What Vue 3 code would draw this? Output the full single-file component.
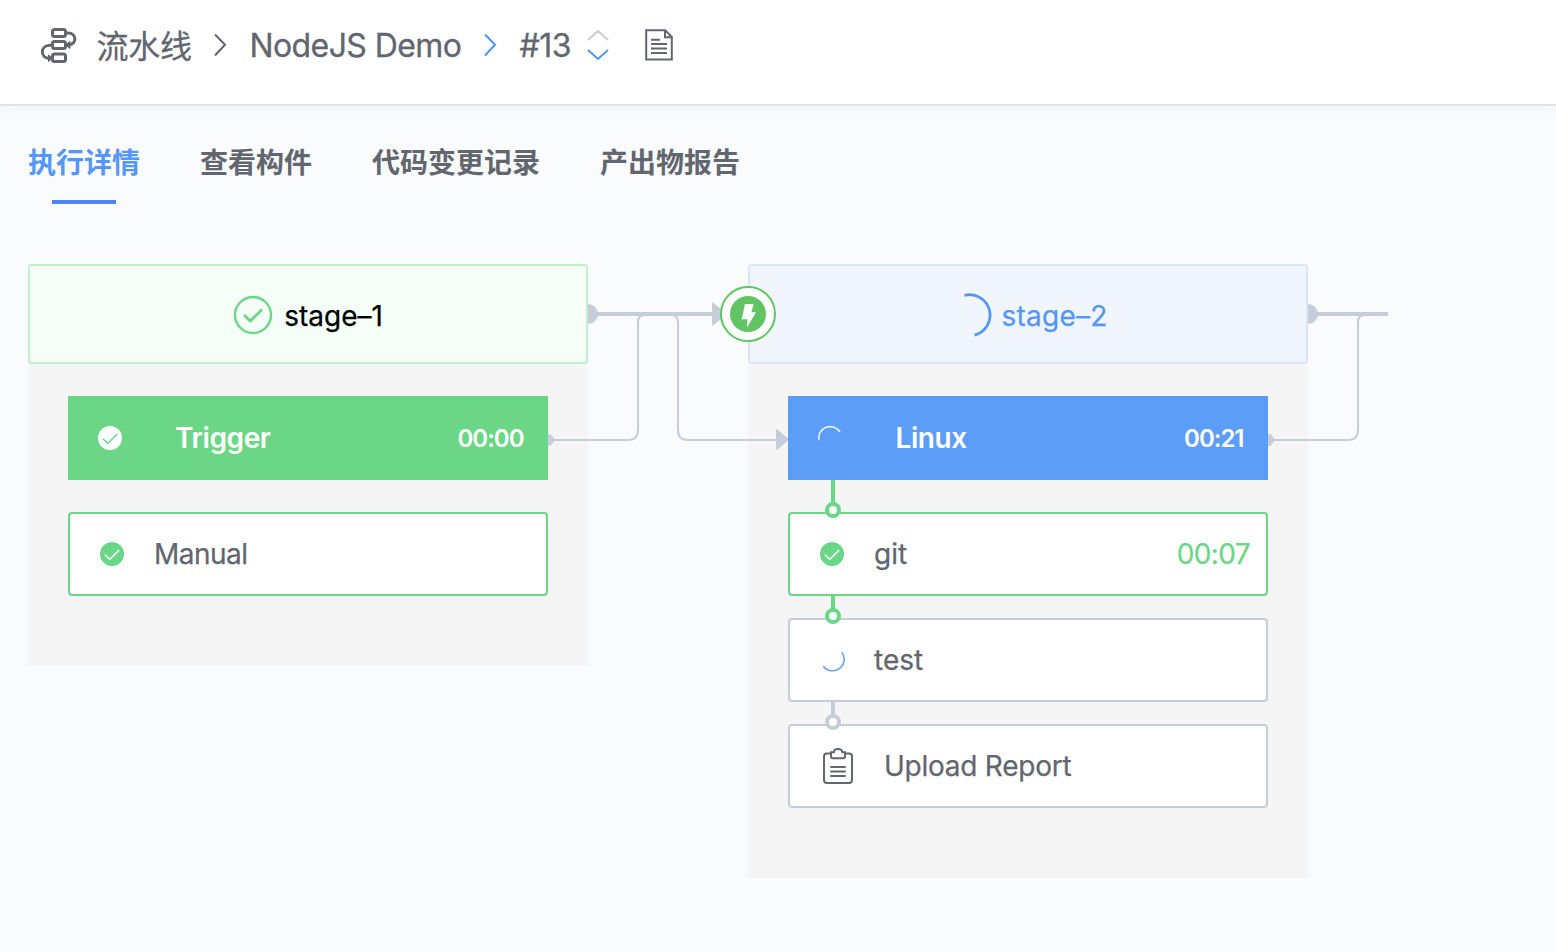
<script setup>
const tabs = [
  { label: '执行详情', active: true },
  { label: '查看构件' },
  { label: '代码变更记录' },
  { label: '产出物报告' },
]

const stages = [
  {
    name: 'stage–1',
    state: 'done',
    job: { name: 'Trigger', time: '00:00' },
    steps: [{ name: 'Manual', state: 'done' }],
  },
  {
    name: 'stage–2',
    state: 'running',
    job: { name: 'Linux', time: '00:21' },
    steps: [
      { name: 'git', state: 'done', time: '00:07', link: 'green' },
      { name: 'test', state: 'running', link: 'green' },
      { name: 'Upload Report', state: 'waiting', link: 'gray' },
    ],
  },
]
</script>

<template>
  <div class="page">
    <header class="header">
      <svg class="logo" width="38" height="38" viewBox="0 0 38 38" fill="none" stroke="#62666f" stroke-width="3">
        <rect x="12.5" y="2.5" width="13" height="7" rx="2" />
        <rect x="12.5" y="14.5" width="13" height="7" rx="2" />
        <rect x="12.5" y="27" width="13" height="7.5" rx="2" />
        <path d="M25.5 6H28C37 6 37 17.5 29 17.8M12.5 18.3H10C0 18.5 0 30.5 9 31.5" />
        <path d="M25.5 18L30 14.5V21.5ZM12.5 31.2L8.5 28V34.5Z" fill="#62666f" stroke-width="1" />
      </svg>
      <span class="crumb crumb-root">流水线</span>
      <svg class="sep sep-a" width="14" height="24" viewBox="0 0 14 24" fill="none" stroke="#62666f" stroke-width="2"><path d="M2 1.5L12 11.8L2 22.5" /></svg>
      <span class="crumb crumb-name">NodeJS Demo</span>
      <svg class="sep sep-b" width="14" height="24" viewBox="0 0 14 24" fill="none" stroke="#4e94fa" stroke-width="2"><path d="M2 1.5L12 11.8L2 22.5" /></svg>
      <span class="crumb crumb-no">#13</span>
      <svg class="updown" width="22" height="32" viewBox="0 0 22 32" fill="none" stroke-width="2">
        <path d="M1 11L11 2L21 11" stroke="#c5ced8" />
        <path d="M1 21L11 30L21 21" stroke="#4e94fa" />
      </svg>
      <svg class="doc" width="28" height="32" viewBox="0 0 28 32" fill="none" stroke="#62666f" stroke-width="2">
        <path d="M1.2 1.2H20.2L26.8 8V30.5H1.2Z" />
        <path d="M20 1.5V8.2H26.5M6 10.8H15M6 15H22M6 19.5H22M6 24H22" />
      </svg>
    </header>

    <nav class="tabs">
      <a v-for="t in tabs" :key="t.label" class="tab" :class="{ active: t.active }">{{ t.label }}</a>
    </nav>

    <main class="board">
      <section v-for="s in stages" :key="s.name" class="stage" :class="s.state">
        <div class="stage-head">
          <svg v-if="s.state === 'done'" class="head-check" width="40" height="40" viewBox="0 0 40 40" fill="none" stroke="#6bd686">
            <circle cx="20" cy="20" r="18" stroke-width="2.4" />
            <path d="M11 20L17.3 26L29 14.5" stroke-width="2.8" />
          </svg>
          <svg v-else class="head-spin" width="46" height="46" viewBox="0 0 46 46" fill="none" stroke="#5597f8">
            <path d="M14.5 3.3A20.5 20.5 0 0 1 24.5 43.2" stroke-width="2.8" />
          </svg>
          <span class="stage-name">{{ s.name }}</span>
        </div>

        <div class="jobs">
          <div class="job">
            <svg v-if="s.state === 'done'" class="job-icon" width="24" height="24" viewBox="0 0 24 24" fill="none">
              <circle cx="12" cy="12" r="12" fill="#fff" />
              <path d="M4.8 12.8L9.8 17.3L19.3 8" stroke="#6bd686" stroke-width="1.5" />
            </svg>
            <svg v-else class="job-icon" width="24" height="24" viewBox="0 0 24 24" fill="none">
              <path d="M1 16.2A11.4 11.4 0 0 1 22 8.2" stroke="#e8f2ff" stroke-width="1.6" />
            </svg>
            <span class="job-name">{{ s.job.name }}</span>
            <span class="job-time">{{ s.job.time }}</span>
          </div>

          <div class="steps">
            <div v-for="st in s.steps" :key="st.name" class="step" :class="st.state">
              <i v-if="st.link" class="link" :class="st.link"></i>
              <svg v-if="st.state === 'done'" class="step-icon" width="24" height="24" viewBox="0 0 24 24" fill="none">
                <circle cx="12" cy="12" r="12" fill="#6bd686" />
                <path d="M4.8 12.8L9.8 17.3L19.3 8" stroke="#fff" stroke-width="1.5" />
              </svg>
              <svg v-else-if="st.state === 'running'" class="step-icon" width="26" height="24" viewBox="0 0 26 24" fill="none">
                <path d="M21.8 4.2A11 11 0 0 1 3.3 18.2" stroke="#65a4fa" stroke-width="1.6" />
              </svg>
              <svg v-else class="clip" width="32" height="38" viewBox="0 0 32 38" fill="none" stroke="#62666f" stroke-width="2">
                <path d="M9 6.5H5Q2 6.5 2 9.5V33Q2 36 5 36H27Q30 36 30 33V9.5Q30 6.5 27 6.5H23" />
                <path d="M9 5.2H11.8Q12 2 16 2T20.3 5.2H23V9.5Q23 11.3 21.2 11.3H10.8Q9 11.3 9 9.5Z" />
                <path d="M9 20H23M9 24.5H23M9 29H23" stroke-linecap="round" />
              </svg>
              <span class="step-name">{{ st.name }}</span>
              <span v-if="st.time" class="step-time">{{ st.time }}</span>
            </div>
          </div>
        </div>
      </section>

      <!-- connector lines between stages and jobs -->
      <svg class="wires" width="1556" height="688" viewBox="0 264 1556 688" fill="none" stroke="#c5ced8">
        <g fill="#c5ced8" stroke="none">
          <path d="M588 304A10 10 0 0 1 588 324ZM1308 304A10 10 0 0 1 1308 324Z" />
          <path d="M548 434A6 6 0 0 1 548 446ZM1268 434A6 6 0 0 1 1268 446Z" />
          <path d="M712 302L728 314L712 326ZM776 430Q776 429 777.5 429.5L788 438.5V440.5L777.5 449.5Q776 450 776 449Z" />
        </g>
        <path d="M596 314H714M1316 314H1388" stroke-width="4" />
        <path d="M552 440H628Q638 440 638 430V322Q638 315 645 315M671 315Q678 315 678 322V430Q678 440 688 440H778M1272 440H1348Q1358 440 1358 430V322Q1358 315 1365 315" stroke-width="2" />
      </svg>
      <svg class="bolt" width="56" height="56" viewBox="0 0 56 56">
        <circle cx="28" cy="28" r="27" fill="#fff" stroke="#5fc562" stroke-width="2" />
        <circle cx="28" cy="28" r="18" fill="#61c566" />
        <path d="M25 18H33.6L31.4 26.2H36L27 41.5L27.4 33.2H21.7Z" fill="#fff" />
      </svg>
    </main>
  </div>
</template>

<style>
body { background: #fafbfd; overflow: hidden; }
</style>

<style scoped>
.page { width: 1556px; height: 952px; background: #fafbfd; font-family: Inter, "Noto Sans CJK SC", sans-serif; color: #62666f; overflow: hidden; }
.header { height: 106px; box-sizing: border-box; border-bottom: 2px solid #dfe4ea; background: #fff; box-shadow: 0 2px 16px rgba(30, 50, 80, .05); display: flex; align-items: flex-start; padding-left: 40px; position: relative; }
.header svg { flex: none; }
.logo { margin-top: 27px; }
.crumb { font-size: 32px; line-height: 40px; margin-top: 26px; white-space: nowrap; flex: none; -webkit-text-stroke: .3px currentColor; }
.crumb-root { margin: 27px 0 0 18.5px; width: 95.5px; letter-spacing: -.3px; }
.sep { margin-top: 33px; }
.sep-a { margin-left: 21px; }
.crumb-name { margin-left: 22.5px; width: 211.5px; letter-spacing: -.6px; }
.sep-b { margin-left: 22px; }
.crumb-no { margin-left: 22.5px; width: 51.5px; letter-spacing: -.5px; }
.updown { margin: 29px 0 0 15.5px; }
.doc { margin: 29px 0 0 36.5px; }
.tabs { height: 158px; box-sizing: border-box; padding: 37px 0 0 28px; display: flex; gap: 60px; }
.tab { height: 62px; font-size: 28px; line-height: 40px; font-weight: 700; display: flex; flex-direction: column; align-items: center; }
.tab.active { color: #5597f8; }
.tab.active::after { content: ""; width: 64px; height: 4px; margin-top: 17px; background: #4e86fa; }
.board { position: relative; height: 688px; display: flex; align-items: flex-start; gap: 160px; padding-left: 28px; }
.stage { width: 560px; background: #f5f5f5; padding-bottom: 70px; flex: none; }
.stage-head { height: 100px; box-sizing: border-box; border: 2px solid #c4efcc; border-radius: 4px; background: #f5fff8; display: flex; align-items: center; justify-content: center; color: #000; font-size: 28px; }
.running .stage-head { border-color: #d7e6fd; background: #f0f5fe; color: #5597f8; }
.head-check { margin: 2px 11px 0 0; }
.head-spin { margin: 2px 5px 0 2px; }
.stage-name { line-height: 40px; margin-top: 4px; white-space: nowrap; -webkit-text-stroke: .25px currentColor; }
.running .stage-name { letter-spacing: .25px; }
.jobs { padding: 32px 40px 0; }
.job { height: 84px; box-sizing: border-box; background: #6bd686; color: #fff; display: flex; align-items: center; padding: 0 24px 0 30px; font-weight: 600; }
.running .job { background: #5c9df8; }
.job-icon { margin-top: -1px; flex: none; }
.running .job-icon { margin: -4px 0 0 -.5px; }
.job-name { margin-left: 54px; font-size: 28px; letter-spacing: -.4px; }
.done .job-name { margin-left: 53px; }
.job-time { margin: 1px .5px 0 auto; font-size: 24px; letter-spacing: -1px; }
.steps { margin-top: 32px; display: flex; flex-direction: column; gap: 22px; }
.step { position: relative; height: 84px; box-sizing: border-box; border: 2px solid #c5ced8; border-radius: 4px; background: #fff; display: flex; align-items: center; padding: 0 16px 0 30px; font-size: 28px; }
.step.done { border-color: #6bd686; }
.step-icon { margin-top: -1px; }
.step.running .step-icon { margin-right: -2px; }
.step-name { margin-left: 30px; white-space: nowrap; letter-spacing: -.25px; -webkit-text-stroke: .25px currentColor; }
.step.done .step-name { letter-spacing: -.5px; }
.stage.running .step.done .step-name { letter-spacing: 0; }
.step.running .step-name { letter-spacing: 0; }
.step-time { margin-left: auto; color: #6bd686; letter-spacing: -.6px; -webkit-text-stroke: .25px currentColor; }
.clip { margin-left: 2px; }
.link { position: absolute; left: 35px; top: -12px; width: 8px; height: 8px; border: 4px solid #6bd686; border-radius: 50%; background: #fff; }
.link::before { content: ""; position: absolute; left: 2px; bottom: 11px; width: 4px; height: 13px; background: #6bd686; }
.step:first-child .link::before { height: 23px; }
.link.gray { border-color: #c5ced8; }
.link.gray::before { background: #c5ced8; }
.wires { position: absolute; left: 0; top: 0; }
.bolt { position: absolute; left: 720px; top: 22px; }
</style>
